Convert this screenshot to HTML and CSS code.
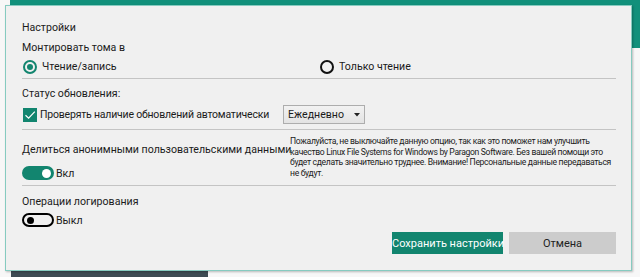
FILE: index.html
```html
<!DOCTYPE html>
<html lang="ru">
<head>
    <meta charset="UTF-8">
    <title>Настройки</title>
    <link rel="stylesheet" href="styles.css">
</head>
<body>
    <div class="app">
        <div class="app-header"></div>
        <div class="app-body">
            <div class="app-sidebar"></div>
        </div>
    </div>

    <div class="dialog">
        <div class="section">
            <div class="title">Настройки</div>
            <div class="label">Монтировать тома в</div>
            <div class="radio-row">
                <label class="radio checked"><span class="radio-mark"></span>Чтение/запись</label>
                <label class="radio"><span class="radio-mark"></span>Только чтение</label>
            </div>
        </div>

        <div class="section updates">
            <div class="label">Статус обновления:</div>
            <div class="check-row">
                <label class="check">
                    <span class="check-mark">
                        <svg width="14" height="14" viewBox="0 0 14 14"><path d="M2.5 7.2 L5.6 10.2 L11.8 3.6" fill="none" stroke="#fff" stroke-width="1.2"/></svg>
                    </span>
                    Проверять наличие обновлений автоматически
                </label>
                <div class="select">
                    <span>Ежедневно</span>
                    <svg width="6" height="4" viewBox="0 0 6 4"><path d="M0 0 H6 L3 3.5 Z" fill="#222"/></svg>
                </div>
            </div>
        </div>

        <div class="section share">
            <div class="share-main">
                <div class="label">Делиться анонимными пользовательскими данными</div>
                <div class="toggle-row">
                    <span class="toggle on"><span class="knob"></span></span>Вкл
                </div>
            </div>
            <p class="note">Пожалуйста, не выключайте данную опцию, так как это поможет нам улучшить качество Linux File Systems for Windows by Paragon Software. Без вашей помощи это будет сделать значительно труднее. Внимание! Персональные данные передаваться не будут.</p>
        </div>

        <div class="section last">
            <div class="label">Операции логирования</div>
            <div class="toggle-row">
                <span class="toggle off"><span class="knob"></span></span>Выкл
            </div>
        </div>

        <div class="buttons">
            <button class="btn primary">Сохранить настройки</button>
            <button class="btn">Отмена</button>
        </div>
    </div>
</body>
</html>
```

FILE: styles.css
```css
body {
    margin: 0;
    background: #f7f7f7;
    font-family: Roboto, "Noto Sans", sans-serif;
    color: #1b1b1b;
    overflow: hidden;
}
.app {
    height: 277px;
    display: flex;
    flex-direction: column;
}
.app-header {
    height: 48px;
    margin-left: 10px;
    background: #11907b;
}
.app-body {
    flex: 1;
    display: flex;
    align-items: flex-end;
}
.app-sidebar {
    width: 197px;
    height: 8px;
    margin-left: 11px;
    background: #3d4b53;
}
.dialog {
    position: absolute;
    left: 5px;
    top: 5px;
    width: 594px;
    height: 252px;
    padding: 12px 15px 0 16px;
    background: #f0f0f0;
    border: 1px solid #86cbc0;
    box-shadow: 1px 1px 2px rgba(0, 0, 0, 0.25);
    font-size: 10.6px;
    white-space: nowrap;
}
.section {
    border-bottom: 1px solid #c4c4c4;
}
.title, .label {
    height: 20px;
    line-height: 20px;
}
.radio-row {
    display: flex;
    height: 17px;
    align-items: center;
    padding-bottom: 3px;
}
.radio {
    display: flex;
    align-items: center;
    width: 297px;
}
.radio-mark {
    width: 10px;
    height: 10px;
    border: 2px solid #111;
    border-radius: 50%;
    margin: 0 5px 0 1px;
    position: relative;
}
.radio.checked .radio-mark {
    border-color: #12856f;
}
.radio.checked .radio-mark::after {
    content: "";
    position: absolute;
    left: 2px;
    top: 2px;
    width: 6px;
    height: 6px;
    border-radius: 50%;
    background: #12856f;
}
.updates {
    padding-top: 5px;
}
.check-row {
    display: flex;
    align-items: center;
    height: 21px;
    padding-bottom: 4px;
}
.check {
    display: flex;
    align-items: center;
    width: 261px;
    font-size: 10.5px;
    letter-spacing: -0.2px;
}
.check-mark {
    width: 14px;
    height: 14px;
    background: #12856f;
    margin: 0 3px 0 1px;
    display: flex;
}
.select {
    width: 72px;
    height: 17px;
    padding: 0 4px;
    border: 1px solid #adadad;
    background: linear-gradient(#f2f2f2, #e3e3e3);
    display: flex;
    align-items: center;
    justify-content: space-between;
}
.share {
    display: flex;
    padding-top: 10px;
    padding-bottom: 1px;
}
.share-main {
    width: 268px;
}
.share .toggle-row {
    padding-top: 2px;
    height: 22px;
}
.toggle-row {
    display: flex;
    align-items: center;
    height: 24px;
}
.toggle {
    width: 32px;
    height: 14px;
    border-radius: 8px;
    box-sizing: border-box;
    margin-right: 2px;
    display: flex;
    align-items: center;
}
.toggle.on {
    background: #12856f;
    justify-content: flex-end;
    padding-right: 3px;
}
.toggle.on .knob {
    width: 9px;
    height: 9px;
    border-radius: 50%;
    background: #fff;
}
.toggle.off {
    border: 2px solid #000;
    padding-left: 3px;
}
.toggle.off .knob {
    width: 7px;
    height: 7px;
    border-radius: 50%;
    background: #000;
}
.section.last {
    border-bottom: none;
    padding-top: 7px;
}
.section.last .label {
    height: 18px;
    line-height: 18px;
}
.section.last .toggle-row {
    height: 18px;
}
.note {
    margin: -4px 0 0 0;
    flex: 1;
    font-size: 8.6px;
    letter-spacing: -0.33px;
    line-height: 10.7px;
    white-space: normal;
}
.buttons {
    display: flex;
    justify-content: flex-end;
    gap: 6px;
    margin-top: 3px;
}
.btn {
    height: 22px;
    border: none;
    background: #cccccc;
    color: #222;
    font-family: inherit;
    font-size: 11px;
    width: 107px;
    padding: 0;
}
.btn.primary {
    background: #12856f;
    color: #fff;
    width: 111px;
}
```
